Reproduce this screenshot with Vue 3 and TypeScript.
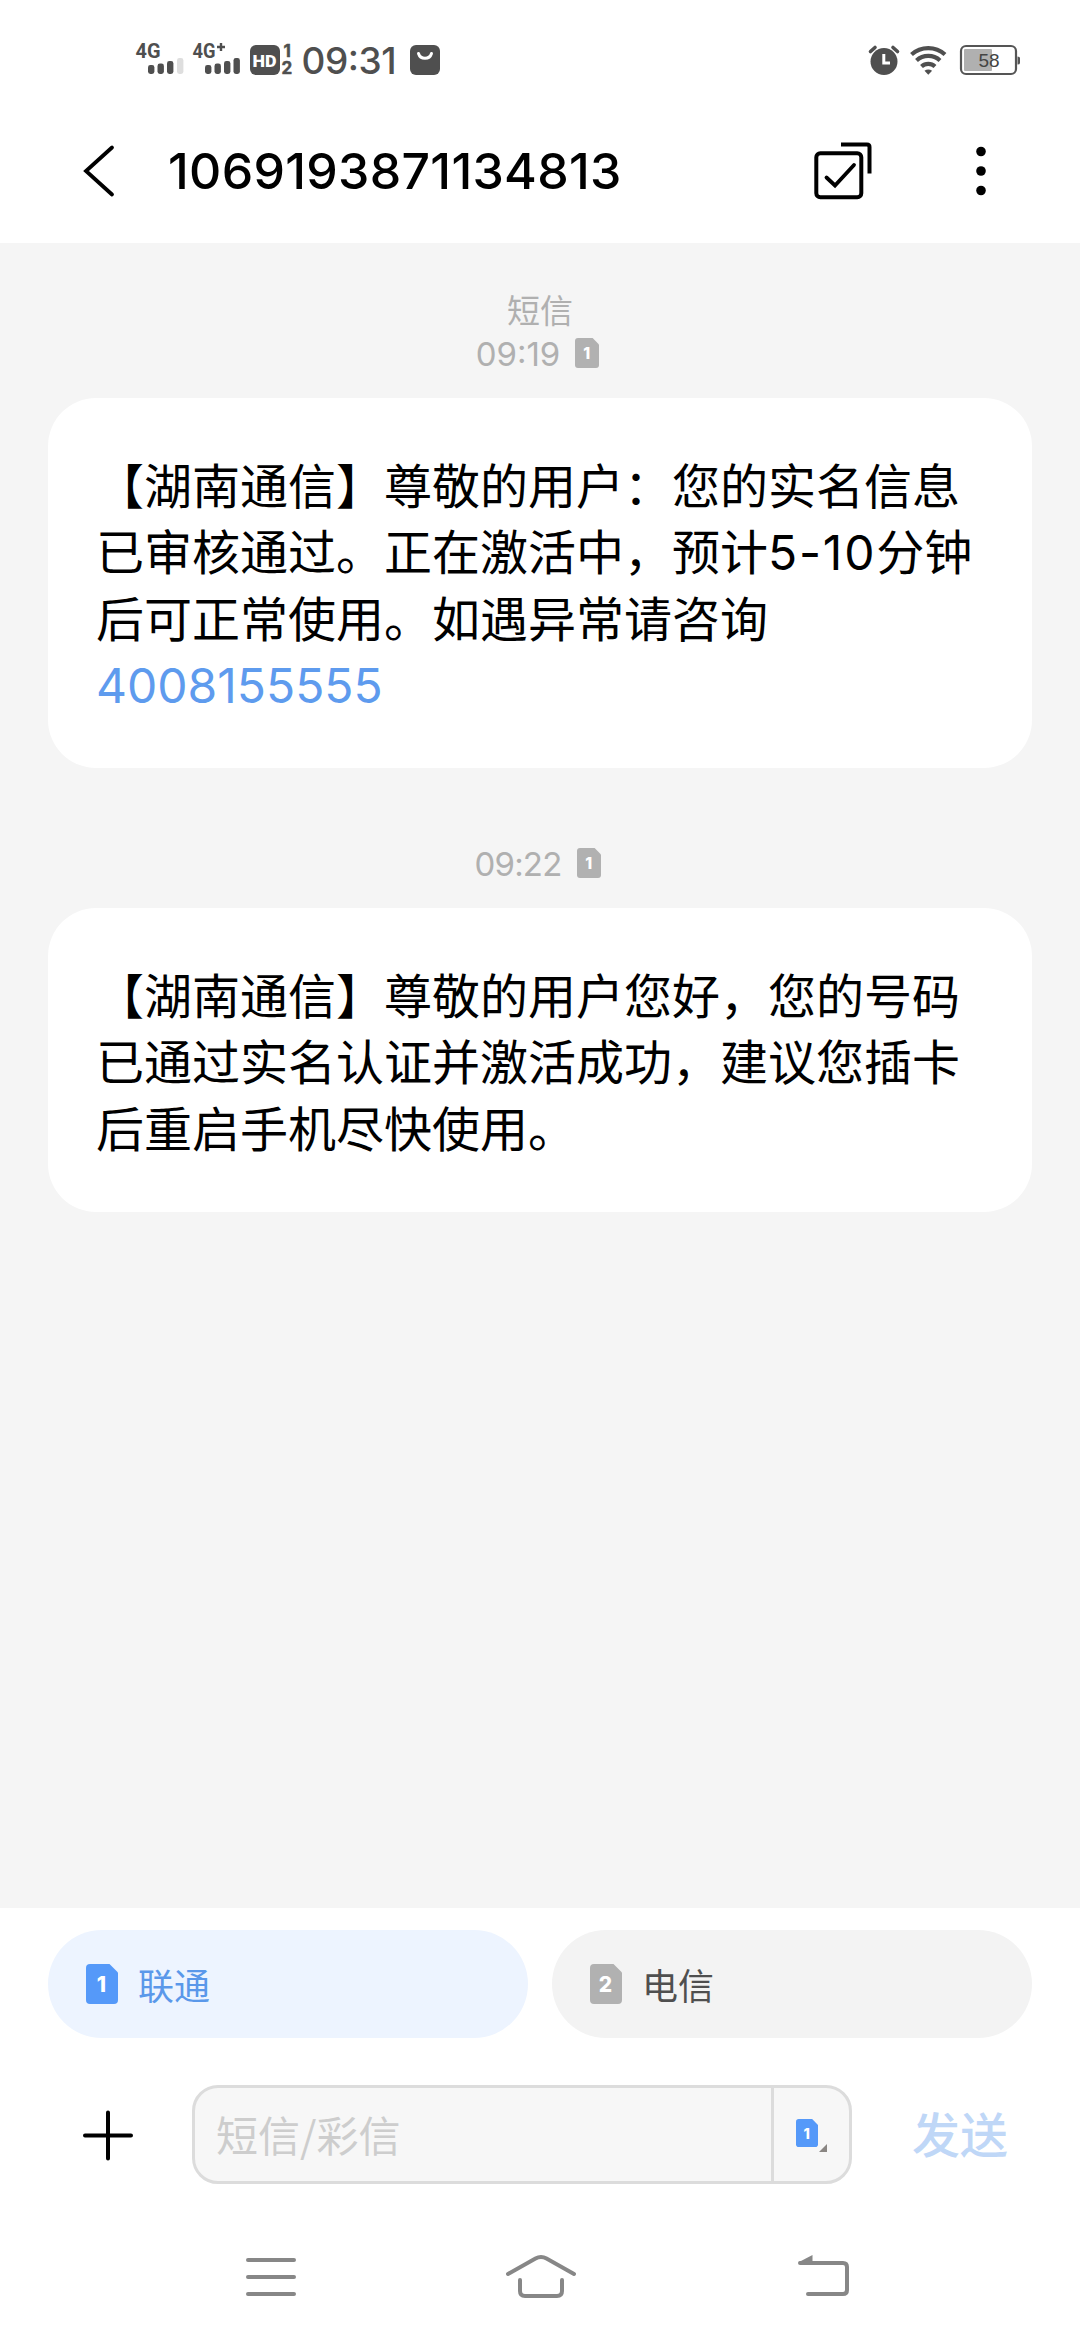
<script setup lang="ts">
interface Part {
  text: string
  kind: 'text' | 'num' | 'link'
}
interface Message {
  id: number
  label?: string
  time: string
  sim: number
  parts: Part[]
}

const messages: Message[] = [
  {
    id: 1,
    label: '短信',
    time: '09:19',
    sim: 1,
    parts: [
      { text: '【湖南通信】尊敬的用户：您的实名信息已审核通过。正在激活中，预计', kind: 'text' },
      { text: '5-10', kind: 'num' },
      { text: '分钟后可正常使用。如遇异常请咨询', kind: 'text' },
      { text: '4008155555', kind: 'link' },
    ],
  },
  {
    id: 2,
    time: '09:22',
    sim: 1,
    parts: [
      {
        text: '【湖南通信】尊敬的用户您好，您的号码已通过实名认证并激活成功，建议您插卡后重启手机尽快使用。',
        kind: 'text',
      },
    ],
  },
]

const sims = [
  { slot: 1, name: '联通', active: true },
  { slot: 2, name: '电信', active: false },
]
</script>

<template>
  <div class="screen">
    <header class="status">
      <svg class="status-left" width="320" height="50" viewBox="130 35 320 50">
        <g fill="#4f4f4f">
          <text x="135.5" y="57.5" class="net" textLength="25" lengthAdjust="spacingAndGlyphs">4G</text>
          <rect x="148" y="65" width="6.4" height="9" rx="2.4" />
          <rect x="157.500" y="63.500" width="6.400" height="10.500" rx="2.400" />
          <rect x="167" y="61" width="6.4" height="13" rx="2.4" />
          <rect x="177" y="58" width="6.4" height="16" rx="2.4" fill="#dedede" />
          <text x="192.500" y="57.500" class="net" textLength="23" lengthAdjust="spacingAndGlyphs">4G</text>
          <path d="M217 47h8M221 43v8" stroke="#4f4f4f" stroke-width="2.4" />
          <rect x="205" y="65" width="6.4" height="9" rx="2.4" />
          <rect x="214.500" y="63.500" width="6.400" height="10.500" rx="2.400" />
          <rect x="224" y="61" width="6.4" height="13" rx="2.4" />
          <rect x="233.500" y="58" width="6.400" height="16" rx="2.400" />
          <rect x="250" y="45" width="30" height="30" rx="6" />
          <text x="252.500" y="66.500" class="hd" textLength="24" lengthAdjust="spacingAndGlyphs">HD</text>
          <text x="283.500" y="56.500" class="idx">1</text>
          <text x="281.500" y="74" class="idx">2</text>
          <text x="301.500" y="73.500" class="clock" textLength="95">09:31</text>
          <rect x="410" y="45" width="30" height="30" rx="6" />
          <path d="M418.500 53.500a6.800 6.800 0 0 0 13 0" fill="none" stroke="#fff" stroke-width="3" stroke-linecap="round" />
        </g>
      </svg>
      <svg class="status-right" width="180" height="50" viewBox="860 35 180 50">
        <circle cx="884" cy="61.500" r="13.500" fill="#4f4f4f" />
        <path d="M870.500 51.500l4.500-4M897.500 51.500l-4.500-4" stroke="#4f4f4f" stroke-width="3.600" stroke-linecap="round" />
        <path d="M883.800 54v9h6.200" fill="none" stroke="#fff" stroke-width="3" />
        <g fill="none" stroke="#4f4f4f" stroke-width="4.200">
          <path d="M911.500 54.500a25 25 0 0 1 33.500 0" />
          <path d="M916.500 60.500a17.500 17.500 0 0 1 23.500 0" />
          <path d="M921.500 66.500a10 10 0 0 1 13.500 0" />
        </g>
        <path d="M924.500 70.800q3.700-2.600 7.600 0l-3.800 4z" fill="#4f4f4f" />
        <rect x="961" y="46" width="55" height="28" rx="5" fill="#fff" stroke="#555" stroke-width="2.200" />
        <rect x="964" y="49" width="28" height="22" rx="1" fill="#b0b0b0" />
        <path d="M1017.500 56.500q2.500 0 2.500 1.500v5q0 1.500-2.500 1.500z" fill="#555" />
        <text x="978.500" y="67" class="battery">58</text>
      </svg>
    </header>

    <nav class="title-bar">
      <svg class="back" width="40" height="60" viewBox="80 141 40 60">
        <path d="M112 147.500L86 171l26 23.500" fill="none" stroke="#000" stroke-width="3.800" stroke-linecap="round" />
      </svg>
      <h1 class="title">1069193871134813</h1>
      <svg class="select" width="70" height="70" viewBox="810 136 70 70" fill="none" stroke="#000" stroke-width="4" stroke-linecap="round">
        <rect x="816.300" y="153.300" width="45" height="44" rx="4" />
        <path d="M826.500 177.500l8.500 8 19-20.500" stroke-width="3.800" />
        <path d="M841 144.500h26q2.500 0 2.500 2.500v26.500" stroke-linecap="butt" />
      </svg>
      <svg class="more" width="20" height="60" viewBox="971 141 20 60">
        <circle cx="981" cy="151.500" r="4.800" />
        <circle cx="981" cy="171" r="4.800" />
        <circle cx="981" cy="190.500" r="4.800" />
      </svg>
    </nav>

    <main class="thread">
      <section v-for="m in messages" :key="m.id" class="entry">
        <div v-if="m.label" class="label">{{ m.label }}</div>
        <div class="meta">
          <span class="time" :class="{ tight: !m.label }">{{ m.time }}</span>
          <svg class="sim" width="24" height="30" viewBox="0 0 32 40">
            <path d="M4 0h19.500L32 8.500V36q0 4-4 4H4q-4 0-4-4V4q0-4 4-4z" fill="#b1b1b1" />
            <text x="15.500" y="28" class="sim-no">{{ m.sim }}</text>
          </svg>
        </div>
        <p class="bubble"><span v-for="(p, i) in m.parts" :key="i" :class="p.kind">{{ p.text }}</span></p>
      </section>
    </main>

    <footer class="composer">
      <div class="chips">
        <div v-for="s in sims" :key="s.slot" class="chip" :class="{ active: s.active }">
          <svg width="32" height="40" viewBox="0 0 32 40">
            <path d="M4 0h19.500L32 8.500V36q0 4-4 4H4q-4 0-4-4V4q0-4 4-4z" :fill="s.active ? '#5599f9' : '#b1b1b1'" />
            <text x="15.500" y="28" class="sim-no">{{ s.slot }}</text>
          </svg>
          <span class="chip-name">{{ s.name }}</span>
        </div>
      </div>
      <div class="input-row">
        <svg class="plus" width="54" height="54" viewBox="0 0 54 54">
          <path d="M4 27.500h46M27 4.500v46" stroke="#000" stroke-width="4" stroke-linecap="round" />
        </svg>
        <div class="field">
          <div class="placeholder">短信/彩信</div>
          <div class="slot">
            <svg width="34" height="36" viewBox="794 2117 34 36">
              <svg x="796" y="2119" width="22" height="28" viewBox="0 0 32 40" preserveAspectRatio="none">
                <path d="M4 0h19.500L32 8.500V36q0 4-4 4H4q-4 0-4-4V4q0-4 4-4z" fill="#5599f9" />
                <text x="15.500" y="28" class="sim-no">1</text>
              </svg>
              <path d="M827 2144v8h-8z" fill="#8a8683" />
            </svg>
          </div>
        </div>
        <div class="send">发送</div>
      </div>
      <div class="system-nav">
        <svg width="60" height="50" viewBox="241 2252 60 50" fill="none" stroke="#878787" stroke-width="4" stroke-linecap="round">
          <path d="M248 2260h46M248 2277h46M248 2294h46" />
        </svg>
        <svg class="home" width="80" height="50" viewBox="500 2252 80 50" fill="none" stroke="#878787" stroke-width="4" stroke-linecap="round">
          <path d="M508 2274l27.500-15.500q5.500-3 11 0L574 2274" />
          <path d="M520 2280v11q0 5 5 5h32q5 0 5-5v-11" />
        </svg>
        <svg width="60" height="50" viewBox="793 2252 60 50" fill="none" stroke="#878787" stroke-width="4" stroke-linecap="round">
          <path d="M800 2263h43q4 0 4 4v23q0 4-4 4h-35" />
          <path d="M799 2262l13.500-7v8z" fill="#878787" stroke="none" />
        </svg>
      </div>
    </footer>
  </div>
</template>

<style>
body {
  margin: 0;
  background: #fff;
}
</style>

<style scoped>
.screen {
  width: 1080px;
  height: 2340px;
  display: flex;
  flex-direction: column;
  overflow: hidden;
  background: #fff;
  font-family: 'Noto Sans CJK SC', sans-serif;
  text-spacing-trim: space-all;
}
svg {
  display: block;
  flex: none;
}
.status {
  height: 50px;
  padding: 35px 40px 0 130px;
  display: flex;
  justify-content: space-between;
}
.net {
  font: 700 20px Roboto, sans-serif;
}
.hd {
  font: 900 17px Roboto, sans-serif;
  fill: #fff;
}
.idx {
  font: 700 17px Inter, sans-serif;
  stroke: #4f4f4f;
  stroke-width: 0.5px;
}
.clock {
  font: 450 37px Inter, sans-serif;
}
.battery {
  font: 400 19px 'Liberation Sans', sans-serif;
  fill: #444;
}
.title-bar {
  height: 158px;
  padding: 14px 0 1px 80px;
  box-sizing: border-box;
  display: flex;
  align-items: center;
}
.title {
  margin: 0 0 0 48px;
  width: 642px;
  font: 500 50px/60px Inter, sans-serif;
  letter-spacing: 0.3px;
  color: #000;
}
.more {
  margin-left: 91px;
}
.thread {
  height: 1665px;
  background: #f5f5f5;
  display: flex;
  flex-direction: column;
  gap: 74px;
  box-sizing: border-box;
  padding: 45px 48px 0;
}
.label {
  height: 42px;
  margin-bottom: 2px;
  line-height: 42px;
  font-size: 33px;
  text-align: center;
  color: #b0b0b0;
}
.meta {
  height: 40px;
  display: flex;
  align-items: center;
  justify-content: center;
  gap: 15px;
  padding: 1px 5px 0 0;
  margin-bottom: 25px;
}
.time {
  padding-top: 2px;
  font: 400 33px/38px Inter, sans-serif;
  color: #b0b0b0;
}
.tight {
  letter-spacing: -0.8px;
}
.sim-no {
  font: 800 21px Inter, sans-serif;
  fill: #fff;
  text-anchor: middle;
}
.bubble {
  margin: 0;
  padding: 52px 48px 53px;
  border-radius: 48px;
  background: #fff;
  font-size: 48px;
  line-height: 66.300px;
  color: #000;
}
.num,
.link {
  display: inline-block;
  line-height: 57px;
  white-space: nowrap;
  font-family: Inter, sans-serif;
}
.num {
  letter-spacing: 1.800px;
}
.link {
  color: #5e9bee;
}
.composer {
  flex: 1;
  display: flex;
  flex-direction: column;
}
.chips {
  display: flex;
  gap: 24px;
  padding: 22px 48px 0;
}
.chip {
  flex: 1;
  height: 108px;
  box-sizing: border-box;
  padding-left: 38px;
  border-radius: 54px;
  display: flex;
  align-items: center;
  gap: 20px;
  background: #f3f3f3;
  color: #4f4f4f;
  font-size: 36px;
}
.chip.active {
  background: #edf4ff;
  color: #5a98ea;
}
.input-row {
  display: flex;
  align-items: center;
  margin-top: 47px;
  padding-left: 81px;
}
.field {
  width: 660px;
  height: 99px;
  margin-left: 57px;
  box-sizing: border-box;
  border: 3px solid #dcdcdc;
  border-radius: 26px;
  background: #f7f7f7;
  display: flex;
}
.placeholder {
  flex: 1;
  padding-left: 21px;
  line-height: 92px;
  font-size: 42px;
  color: #cdcdcd;
}
.slot {
  width: 78px;
  border-left: 3px solid #dcdcdc;
  display: flex;
  align-items: center;
  padding-left: 20px;
  box-sizing: border-box;
}
.send {
  margin-left: 60px;
  padding-bottom: 6px;
  font-size: 48px;
  line-height: 60px;
  font-weight: 500;
  color: #bfd7f7;
}
.system-nav {
  display: flex;
  padding: 68px 0 0 241px;
}
.home {
  margin: 0 213px 0 199px;
}
</style>
